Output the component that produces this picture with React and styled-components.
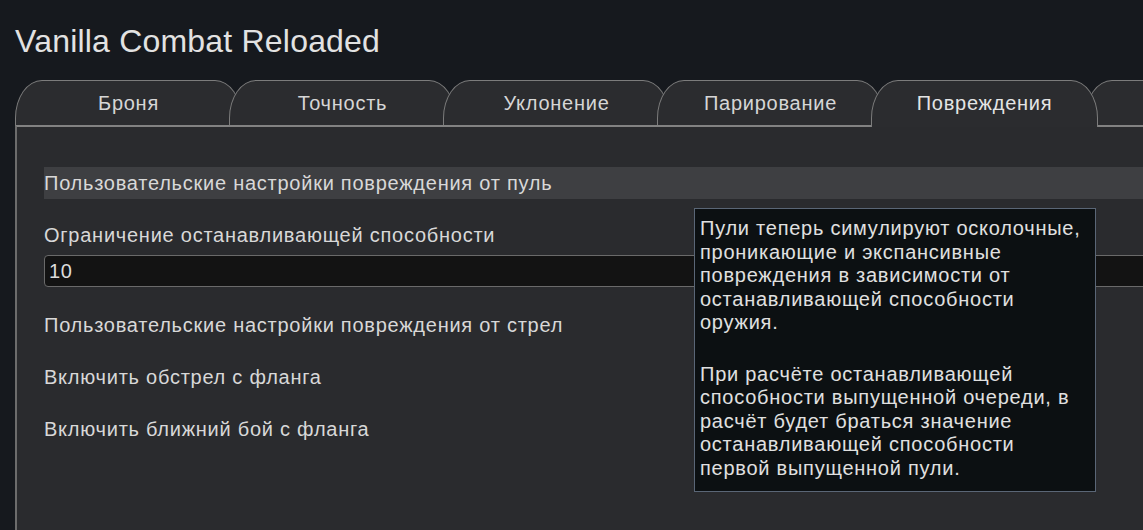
import styled, { createGlobalStyle } from "styled-components";

const GlobalStyle = createGlobalStyle`
    body {
        margin: 0;
        background: #16191e;
        overflow: hidden;
        font-family: "Liberation Sans", Arial, sans-serif;
    }
`

const Page = styled.div`
    position: relative;
    width: 1143px;
    height: 530px;
    padding-left: 15px;
    box-sizing: border-box;
    overflow: hidden;
    letter-spacing: 0.75px;
`
const Title = styled.h1`
    margin: 21px 0 19px;
    font-size: 32px;
    line-height: 40px;
    font-weight: 400;
    letter-spacing: 0.2px;
    color: #e2e2e2;
`
const TabBar = styled.div`
    display: flex;
    height: 45px;
`
const Tab = styled.div`
    position: relative;
    z-index: ${p => p.$active ? 2 : 'auto'};
    flex-shrink: 0;
    box-sizing: border-box;
    width: 227px;
    height: ${p => p.$active ? '47px' : '45px'};
    margin-left: ${p => p.$first ? '0' : '-13px'};
    border: 1.5px solid #7c7c7c;
    border-bottom: none;
    border-radius: 27px 27px 0 0 / 38px 38px 0 0;
    background: #2b2c2f;
    color: ${p => p.$active ? '#e4e4e4' : '#d6d6d6'};
    font-size: 20px;
    line-height: 44px;
    text-align: center;
`
const Panel = styled.div`
    position: relative;
    width: 1300px;
    height: 420px;
    box-sizing: border-box;
    border-top: 2px solid #828282;
    border-left: 2px solid #6c6c6c;
    background: #2a2b2e;
    padding: 40px 0 0 27px;
    color: #d8d8d8;
    font-size: 20px;
`
const SectionBar = styled.div`
    height: 32px;
    line-height: 32px;
    background: #3e3f42;
    margin-bottom: 24px;
`
const Label = styled.div`
    line-height: 24px;
`
const Input = styled.div`
    margin-top: 8px;
    height: 32px;
    box-sizing: border-box;
    border: 1px solid #6a6a6a;
    border-radius: 4px;
    background: #131313;
    padding-left: 4px;
    line-height: 30px;
    color: #dcdcdc;
`
const OptionRow = styled.div`
    display: flex;
    align-items: center;
    height: 52px;
    margin-top: ${p => p.$first ? '12px' : '0'};
`
const Tooltip = styled.div`
    position: absolute;
    left: 694px;
    top: 208px;
    width: 402px;
    height: 284px;
    box-sizing: border-box;
    border: 1.5px solid #5a6676;
    background: #0c1012;
    padding: 8px 5px 0;
    color: #e0e0e0;
    font-size: 20px;
    line-height: 23.5px;
`
const TipParagraph = styled.p`
    margin: 0 0 28px;
`

const tabs = ["Броня", "Точность", "Уклонение", "Парирование", "Повреждения", ""];

export default function App() {
    return (
        <Page>
            <GlobalStyle />
            <Title>Vanilla Combat Reloaded</Title>
            <TabBar>
                {tabs.map((t, i) => (
                    <Tab key={i} $first={i === 0} $active={i === 4}>{t}</Tab>
                ))}
            </TabBar>
            <Panel>
                <SectionBar>Пользовательские настройки повреждения от пуль</SectionBar>
                <Label>Ограничение останавливающей способности</Label>
                <Input>10</Input>
                <OptionRow $first>Пользовательские настройки повреждения от стрел</OptionRow>
                <OptionRow>Включить обстрел с фланга</OptionRow>
                <OptionRow>Включить ближний бой с фланга</OptionRow>
            </Panel>
            <Tooltip>
                <TipParagraph>
                    Пули теперь симулируют осколочные,<br />
                    проникающие и экспансивные<br />
                    повреждения в зависимости от<br />
                    останавливающей способности<br />
                    оружия.
                </TipParagraph>
                <TipParagraph>
                    При расчёте останавливающей<br />
                    способности выпущенной очереди, в<br />
                    расчёт будет браться значение<br />
                    останавливающей способности<br />
                    первой выпущенной пули.
                </TipParagraph>
            </Tooltip>
        </Page>
    )
}
